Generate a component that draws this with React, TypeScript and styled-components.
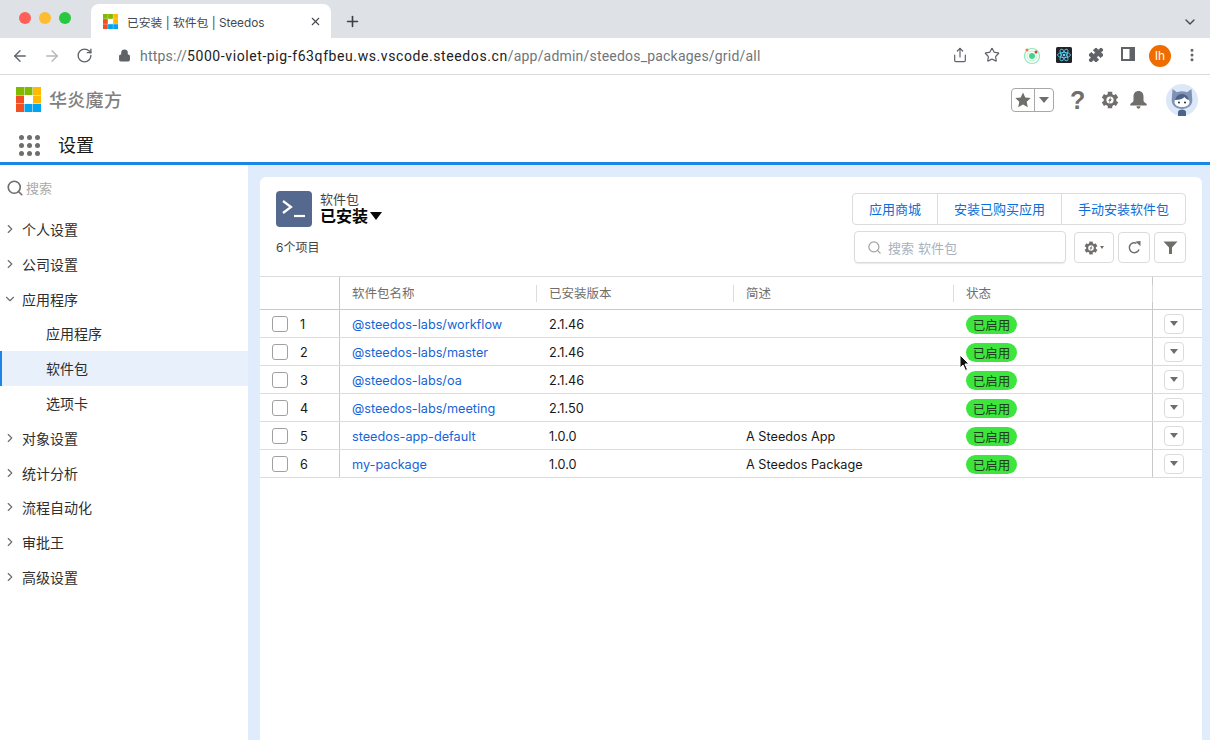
import React from "react";
import styled, { createGlobalStyle } from "styled-components";
import { ChevronRight, ChevronDown, Search, RotateCw, ArrowLeft, ArrowRight, Star, X, Plus, Lock, Puzzle, EllipsisVertical, Share } from "lucide-react";

const Global = createGlobalStyle`
  html, body { margin: 0; padding: 0; height: 100%; overflow: hidden; background: #fff; }
  body { font-family: Inter, "Noto Sans CJK SC", sans-serif; color: #181818; -webkit-font-smoothing: antialiased; }
  * { box-sizing: border-box; }
`;

const Page = styled.div`width: 1210px; height: 740px; position: relative; overflow: hidden; display: flex; flex-direction: column;`;

/* Browser chrome */
const TabStrip = styled.div`height: 38px; background: #dee1e6; display: flex; align-items: flex-end; position: relative; flex: none;`;
const Traffic = styled.div`display: flex; gap: 8px; position: absolute; left: 19px; top: 11.5px;`;
const Dot = styled.span<{ $c: string }>`width: 12px; height: 12px; border-radius: 50%; background: ${p => p.$c};`;
const Tab = styled.div`margin-left: 91px; width: 240px; height: 34px; background: #fff; border-radius: 8px 8px 0 0; display: flex; align-items: center; padding-left: 12px; position: relative; font-size: 11.8px; color: #45484d;`;
const TabTitle = styled.span`margin-left: 9px; white-space: nowrap; flex: 1;`;
const TabClose = styled.span`display: flex; margin-right: 9px; color: #45484d;`;
const NewTab = styled.span`display: flex; margin-left: 13px; margin-bottom: 8px; color: #3c4043;`;
const StripChevron = styled.span`position: absolute; right: 12px; top: 14px; display: flex; color: #45484d;`;

const AddressBar = styled.div`height: 37px; background: #fff; border-bottom: 1px solid #d9dadc; display: flex; align-items: center; position: relative; flex: none;`;
const NavBtn = styled.span<{ $x: number; $c?: string; $y?: number }>`position: absolute; left: ${p => p.$x}px; top: ${p => p.$y ?? 9}px; display: flex; color: ${p => p.$c || "#5f6368"};`;
const Url = styled.div`position: absolute; left: 140px; top: 9px; font-size: 14px; line-height: 18px; color: #70757a; white-space: nowrap; font-family: Roboto, sans-serif; letter-spacing: 0.2px;`;
const UrlHost = styled.span`color: #202124; letter-spacing: 0.59px;`;
const Avatar = styled.span`position: absolute; left: 1149px; top: 7px; width: 22px; height: 22px; border-radius: 50%; background: #ee6c00; color: #fff; font-size: 12px; line-height: 22px; text-align: center;`;

/* App header */
const Header = styled.div`height: 50px; background: #fff; display: flex; align-items: center; position: relative; flex: none;`;
const Brand = styled.div`margin-left: 49px; margin-bottom: 2px; font-size: 18px; font-weight: 500; color: #808080; letter-spacing: 0.3px;`;
const LogoBox = styled.div`position: absolute; left: 16px; top: 12px; display: flex;`;
const FavGroup = styled.div`position: absolute; left: 1011px; top: 12.5px; width: 43px; height: 24px; border: 1px solid #a8a8a8; border-radius: 4px; display: flex;`;
const FavStar = styled.span`width: 23px; border-right: 1px solid #a8a8a8; display: flex; align-items: center; justify-content: center;`;
const FavCaret = styled.span`flex: 1; display: flex; align-items: center; justify-content: center;`;
const Caret = styled.span<{ $w: number; $h: number; $c?: string }>`width: 0; height: 0; border-left: ${p => p.$w}px solid transparent; border-right: ${p => p.$w}px solid transparent; border-top: ${p => p.$h}px solid ${p => p.$c || "#706e6b"};`;
const HeadIconWrap = styled.span<{ $x: number }>`position: absolute; left: ${p => p.$x}px; top: 16px; display: flex;`;
const Help = styled.span`position: absolute; left: 1070px; top: 12px; font-size: 25px; line-height: 26px; font-weight: 700; color: #706e6b; font-family: "Liberation Sans", sans-serif;`;
const Bot = styled.svg`position: absolute; left: 1166px; top: 9px;`;

const AppBar = styled.div`height: 40px; background: #fff; border-bottom: 3px solid #1a86e8; display: flex; align-items: center; flex: none; padding-top: 4px;`;
const Waffle = styled.div`margin-left: 19px; display: grid; grid-template-columns: repeat(3, 5px); gap: 3px; width: 22px;`;
const WDot = styled.span`width: 5px; height: 5px; border-radius: 50%; background: #706e6b;`;
const AppName = styled.div`margin-left: 17px; font-size: 18px; color: #181818; line-height: 24px;`;

/* Body */
const Body = styled.div`flex: 1; display: flex; background: #e0ebfb; min-height: 0;`;
const Side = styled.aside`width: 248px; background: #fff; flex: none; position: relative;`;
const SideSearch = styled.div`height: 47px; display: flex; align-items: center; padding: 0 0 2px 6px; color: #a9a9a9; font-size: 13px; gap: 2px;`;
const SideList = styled.div`margin-top: -0.4px;`;
const SideItem = styled.div<{ $active?: boolean; $child?: boolean }>`height: 34.8px; display: flex; align-items: center; padding-left: ${p => p.$child ? 46 : 3}px; font-size: 14px; color: #2e2e2e; background: ${p => p.$active ? "#e8f0fc" : "transparent"}; border-left: ${p => p.$active ? "2px solid #1a86e8" : "none"}; ${p => p.$active ? "padding-left: 44px;" : ""} svg { margin-right: 5px; color: #706e6b; }`;

const Card = styled.main`margin: 12px 8px 0 12px; flex: 1; background: #fff; border-radius: 6px 6px 0 0; position: relative; display: flex; flex-direction: column;`;
const CardHead = styled.div`height: 99px; position: relative; flex: none;`;
const ObjIcon = styled.div`position: absolute; left: 16px; top: 14px; width: 36px; height: 36px; background: #54698d; border-radius: 4px; display: flex; align-items: center; justify-content: center;`;
const ObjLabel = styled.div`position: absolute; left: 60px; top: 14px; font-size: 13px; line-height: 17px; color: #444;`;
const ObjTitle = styled.div`position: absolute; left: 60px; top: 29px; font-size: 16px; line-height: 20px; font-weight: 700; color: #080707; display: flex; align-items: center; gap: 2px;`;
const Count = styled.div`position: absolute; left: 16px; top: 63px; font-size: 12px; line-height: 16px; color: #444;`;
const BtnGroup = styled.div`position: absolute; left: 592px; top: 16px; width: 334px; height: 32px; border: 1px solid #dcdcdc; border-radius: 4px; display: flex;`;
const GroupBtn = styled.div<{ $w: number }>`width: ${p => p.$w}px; display: flex; align-items: center; justify-content: center; padding-bottom: 1px; font-size: 13px; color: #0b6fd8; border-right: 1px solid #dcdcdc; &:last-child { border-right: none; flex: 1; }`;
const SearchBox = styled.div`position: absolute; left: 594px; top: 54px; width: 212px; height: 32px; border: 1px solid #dddbda; border-radius: 4px; box-shadow: 0 1px 1px #e9e9e9; display: flex; align-items: center; padding-left: 12px; gap: 6px; font-size: 13px; color: #a9b1bd; letter-spacing: 0.1px;`;
const ToolBtn = styled.div<{ $x: number; $w: number }>`position: absolute; left: ${p => p.$x}px; top: 55px; width: ${p => p.$w}px; height: 31px; border: 1px solid #dddbda; border-radius: 4px; display: flex; align-items: center; justify-content: center; gap: 2px; color: #706e6b;`;

const Table = styled.div`border-top: 1px solid #dcdcdc; flex: none;`;
const Row = styled.div<{ $head?: boolean }>`display: grid; grid-template-columns: 79px 197px 197px 220px 199px 50px; height: ${p => p.$head ? 33 : 28}px; border-bottom: 1px solid ${p => p.$head ? "#c9c9c9" : "#dcdcdc"}; font-size: 12.7px; align-items: stretch;`;
const Cell = styled.div`display: flex; align-items: center; padding: 1px 0 0 13px; white-space: nowrap; color: #181818; position: relative;`;
const IdxCell = styled.div`display: flex; align-items: center; border-right: 1px solid #c9c9c9; padding: 1px 0 0 12px; gap: 12px; color: #181818; margin-right: -1px;`;
const Check = styled.span`width: 16px; height: 16px; border: 1px solid #a0a0a0; border-radius: 3px; background: #fff;`;
const HeadCell = styled.div<{ $sep?: boolean }>`display: flex; align-items: center; padding: 0 0 1px 13px; color: #706e6b; font-size: 12.5px; position: relative; ${p => p.$sep ? `&::after { content: ""; position: absolute; right: -1px; top: 8px; height: 17px; width: 1px; background: #dcdcdc; }` : ""}`;
const Link = styled.span`color: #1763d8;`;
const Pill = styled.span`background: #3de63d; border-radius: 10px; height: 19px; width: 51px; display: flex; align-items: center; justify-content: center; font-size: 12.5px; color: #1d3d1d;`;
const ActionCell = styled.div`border-left: 1px solid #c9c9c9; display: flex; align-items: center; padding-left: 11px;`;
const RowBtn = styled.span`width: 20px; height: 20px; border: 1px solid #dddbda; border-radius: 4px; display: flex; align-items: center; justify-content: center;`;
const Pointer = styled.svg`position: absolute; left: 959px; top: 354px;`;

const rows = [
  ["@steedos-labs/workflow", "2.1.46", ""],
  ["@steedos-labs/master", "2.1.46", ""],
  ["@steedos-labs/oa", "2.1.46", ""],
  ["@steedos-labs/meeting", "2.1.50", ""],
  ["steedos-app-default", "1.0.0", "A Steedos App"],
  ["my-package", "1.0.0", "A Steedos Package"],
];

const Logo = ({ size }: { size: number }) => (
  <svg width={size} height={size} viewBox="0 0 25 25" style={{ flex: "none" }}>
    <rect x="0" y="0" width="8" height="8" fill="#7fba00" />
    <rect x="8.5" y="0" width="8" height="8" fill="#7fba00" />
    <rect x="17" y="0" width="8" height="8" fill="#ffb900" />
    <rect x="0" y="8.5" width="8" height="8" fill="#f25022" />
    <rect x="17" y="8.5" width="8" height="8" fill="#ffb900" />
    <rect x="0" y="17" width="8" height="8" fill="#f25022" />
    <rect x="8.5" y="17" width="8" height="8" fill="#00a4ef" />
    <rect x="17" y="17" width="8" height="8" fill="#00a4ef" />
  </svg>
);

const Gear = ({ size, c = "#706e6b" }: { size: number; c?: string }) => {
  const teeth = [0, 60, 120, 180, 240, 300];
  return (
    <svg width={size} height={size} viewBox="0 0 24 24">
      {teeth.map(a => <rect key={a} x="9" y="1" width="6" height="6" fill={c} transform={`rotate(${a} 12 12)`} />)}
      <circle cx="12" cy="12" r="8.500" fill={c} />
      <circle cx="12" cy="12" r="4.800" fill="#fff" />
      <path fill={c} d="M13.500 7.500L9.500 13h2l-1 3.500L14.500 11h-2z" />
    </svg>
  );
};

export default function App() {
  return (
    <Page>
      <Global />
      <TabStrip>
        <Traffic><Dot $c="#ff5f57" /><Dot $c="#febc2e" /><Dot $c="#28c840" /></Traffic>
        <Tab>
          <Logo size={15} />
          <TabTitle>已安装 | 软件包 | Steedos</TabTitle>
          <TabClose><X size={13} strokeWidth={2} /></TabClose>
        </Tab>
        <NewTab><Plus size={17} strokeWidth={2.300} /></NewTab>
        <StripChevron><ChevronDown size={16} strokeWidth={2} /></StripChevron>
      </TabStrip>
      <AddressBar>
        <NavBtn $x={11}><ArrowLeft size={18} strokeWidth={1.8} /></NavBtn>
        <NavBtn $x={43} $c="#b4b6b9"><ArrowRight size={18} strokeWidth={1.8} /></NavBtn>
        <NavBtn $x={76}><RotateCw size={17} strokeWidth={1.9} /></NavBtn>
        <NavBtn $x={118} $y={11}><Lock size={13} fill="#5f6368" strokeWidth={2} /></NavBtn>
        <Url>https://<UrlHost>5000-violet-pig-f63qfbeu.ws.vscode.steedos.cn</UrlHost>/app/admin/steedos_packages/grid/all</Url>
        <NavBtn $x={952}><Share size={16} strokeWidth={1.8} /></NavBtn>
        <NavBtn $x={984}><Star size={16} strokeWidth={1.8} /></NavBtn>
        <NavBtn $x={1023}>
          <svg width="18" height="18" viewBox="0 0 18 18">
            <circle cx="9" cy="9" r="7.500" fill="none" stroke="#8fe8b8" strokeWidth="1.200" />
            <circle cx="9" cy="9" r="5" fill="none" stroke="#b8efd0" strokeWidth="1" />
            <circle cx="9" cy="9" r="3" fill="#3fd48a" />
            <circle cx="4" cy="3" r="1.500" fill="#f07a3a" />
            <circle cx="13" cy="5" r="1.500" fill="#e83a3a" />
          </svg>
        </NavBtn>
        <NavBtn $x={1056}>
          <svg width="16" height="16" viewBox="0 0 16 16">
            <rect width="16" height="16" rx="1.500" fill="#20232a" />
            <g fill="none" stroke="#61dafb" strokeWidth=".8">
              <ellipse cx="8" cy="8" rx="6.500" ry="2.600" />
              <ellipse cx="8" cy="8" rx="6.500" ry="2.600" transform="rotate(60 8 8)" />
              <ellipse cx="8" cy="8" rx="6.500" ry="2.600" transform="rotate(120 8 8)" />
            </g>
            <circle cx="8" cy="8" r="1.300" fill="#61dafb" />
          </svg>
        </NavBtn>
        <NavBtn $x={1088}><Puzzle size={16} fill="#5f6368" strokeWidth={1.500} /></NavBtn>
        <NavBtn $x={1121}>
          <svg width="14" height="14" viewBox="0 0 14 14"><rect x="1" y="1" width="12" height="12" fill="none" stroke="#5f6368" strokeWidth="2" /><rect x="8.500" y="1" width="4.500" height="12" fill="#5f6368" /></svg>
        </NavBtn>
        <Avatar>lh</Avatar>
        <NavBtn $x={1184}><EllipsisVertical size={16} strokeWidth={2.500} /></NavBtn>
      </AddressBar>
      <Header>
        <LogoBox><Logo size={25} /></LogoBox>
        <Brand>华炎魔方</Brand>
        <FavGroup>
          <FavStar>
            <svg width="16" height="16" viewBox="0 0 16 16"><path fill="#706e6b" d="M8 .5l2.300 5 5.400.6-4 3.700 1.100 5.400L8 12.500l-4.800 2.700 1.100-5.400-4-3.700 5.400-.6z" /></svg>
          </FavStar>
          <FavCaret><Caret $w={5} $h={6} /></FavCaret>
        </FavGroup>
        <Help>?</Help>
        <HeadIconWrap $x={1101}><Gear size={18} /></HeadIconWrap>
        <HeadIconWrap $x={1129}>
          <svg width="19" height="18" viewBox="0 0 18 18">
            <path fill="#706e6b" d="M9 0c-3 0-5 2.200-5 5.500v4c0 1.200-1.500 2.300-3.200 3.500v1.500h16.400V13c-1.700-1.200-3.200-2.300-3.200-3.500v-4C14 2.200 12 0 9 0zM7 15.300h4c0 1.500-.9 2.500-2 2.500s-2-1-2-2.500z" />
          </svg>
        </HeadIconWrap>
        <Bot width="32" height="32" viewBox="0 0 32 32">
          <circle cx="16" cy="16" r="16" fill="#dce8f8" />
          <path fill="#7f92b4" d="M6.500 5l4.500 3.200c3-1.200 7-1.200 10 0L25.500 5l.8 11c0 5.500-4.300 9-10.300 9S5.700 21.500 5.700 16z" />
          <path fill="#fff" d="M8.500 18c0-3 3-5.500 7.500-5.500s7.500 2.500 7.500 5.500-3.300 5-7.500 5-7.500-2-7.500-5z" />
          <path fill="#4d6389" d="M9 16c1-4 4-6 7-6s6 2 7 6c-2-.5-3.500-1.500-4.500-3-1.500 1.800-5 3-9.500 3z" />
          <circle cx="13" cy="18.500" r="1" fill="#1f2a40" />
          <circle cx="19" cy="18.500" r="1" fill="#1f2a40" />
          <path fill="#4d6389" d="M12 32v-4c0-1.500 2-2.500 4-2.500s4 1 4 2.500v4z" />
        </Bot>
      </Header>
      <AppBar>
        <Waffle>{Array.from({ length: 9 }).map((_, i) => <WDot key={i} />)}</Waffle>
        <AppName>设置</AppName>
      </AppBar>
      <Body>
        <Side>
          <SideSearch><Search size={18} color="#706e6b" strokeWidth={2.200} />搜索</SideSearch>
          <SideList>
            {["个人设置", "公司设置"].map(t => <SideItem key={t}><ChevronRight size={14} strokeWidth={2} />{t}</SideItem>)}
            <SideItem><ChevronDown size={14} strokeWidth={2} />应用程序</SideItem>
            <SideItem $child>应用程序</SideItem>
            <SideItem $child $active>软件包</SideItem>
            <SideItem $child>选项卡</SideItem>
            {["对象设置", "统计分析", "流程自动化", "审批王", "高级设置"].map(t => <SideItem key={t}><ChevronRight size={14} strokeWidth={2} />{t}</SideItem>)}
          </SideList>
        </Side>
        <Card>
          <CardHead>
            <ObjIcon>
              <svg width="26" height="22" viewBox="0 0 26 22" fill="none" stroke="#fff" strokeWidth="2.200">
                <path d="M2 3l8 6-8 6" />
                <path d="M13 18h11" />
              </svg>
            </ObjIcon>
            <ObjLabel>软件包</ObjLabel>
            <ObjTitle>已安装<Caret $w={6.500} $h={8} $c="#080707" /></ObjTitle>
            <Count>6个项目</Count>
            <BtnGroup>
              <GroupBtn $w={85}>应用商城</GroupBtn>
              <GroupBtn $w={124}>安装已购买应用</GroupBtn>
              <GroupBtn $w={124}>手动安装软件包</GroupBtn>
            </BtnGroup>
            <SearchBox><Search size={15} color="#a3a3a3" strokeWidth={2} />搜索 软件包</SearchBox>
            <ToolBtn $x={814} $w={40}><Gear size={14} /><Caret $w={2.500} $h={3} /></ToolBtn>
            <ToolBtn $x={858} $w={32}>
              <svg width="15" height="15" viewBox="0 0 15 15" fill="none">
                <path d="M12 9.500A5 5 0 1 1 9.500 3.200" stroke="#706e6b" strokeWidth="1.500" />
                <path d="M8.500 1.500L13.500 1v5.200z" fill="#706e6b" />
              </svg>
            </ToolBtn>
            <ToolBtn $x={894} $w={32}>
              <svg width="15" height="15" viewBox="0 0 15 15"><path fill="#706e6b" d="M.5 1.500h14L9 7.500v6.500H6V7.500z" /></svg>
            </ToolBtn>
          </CardHead>
          <Table>
            <Row $head>
              <IdxCell />
              <HeadCell $sep>软件包名称</HeadCell>
              <HeadCell $sep>已安装版本</HeadCell>
              <HeadCell $sep>简述</HeadCell>
              <HeadCell $sep>状态</HeadCell>
              <ActionCell />
            </Row>
            {rows.map((r, i) => (
              <Row key={r[0]}>
                <IdxCell><Check />{i + 1}</IdxCell>
                <Cell><Link>{r[0]}</Link></Cell>
                <Cell>{r[1]}</Cell>
                <Cell>{r[2]}</Cell>
                <Cell><Pill>已启用</Pill></Cell>
                <ActionCell><RowBtn><Caret $w={4.500} $h={5} /></RowBtn></ActionCell>
              </Row>
            ))}
          </Table>
        </Card>
      </Body>
      <Pointer width="12" height="18" viewBox="0 0 12 18">
        <path d="M1 1v13l3-3 2.500 5.500 2-1L6 10h4z" fill="#111" stroke="#fff" strokeWidth="1" />
      </Pointer>
    </Page>
  );
}
